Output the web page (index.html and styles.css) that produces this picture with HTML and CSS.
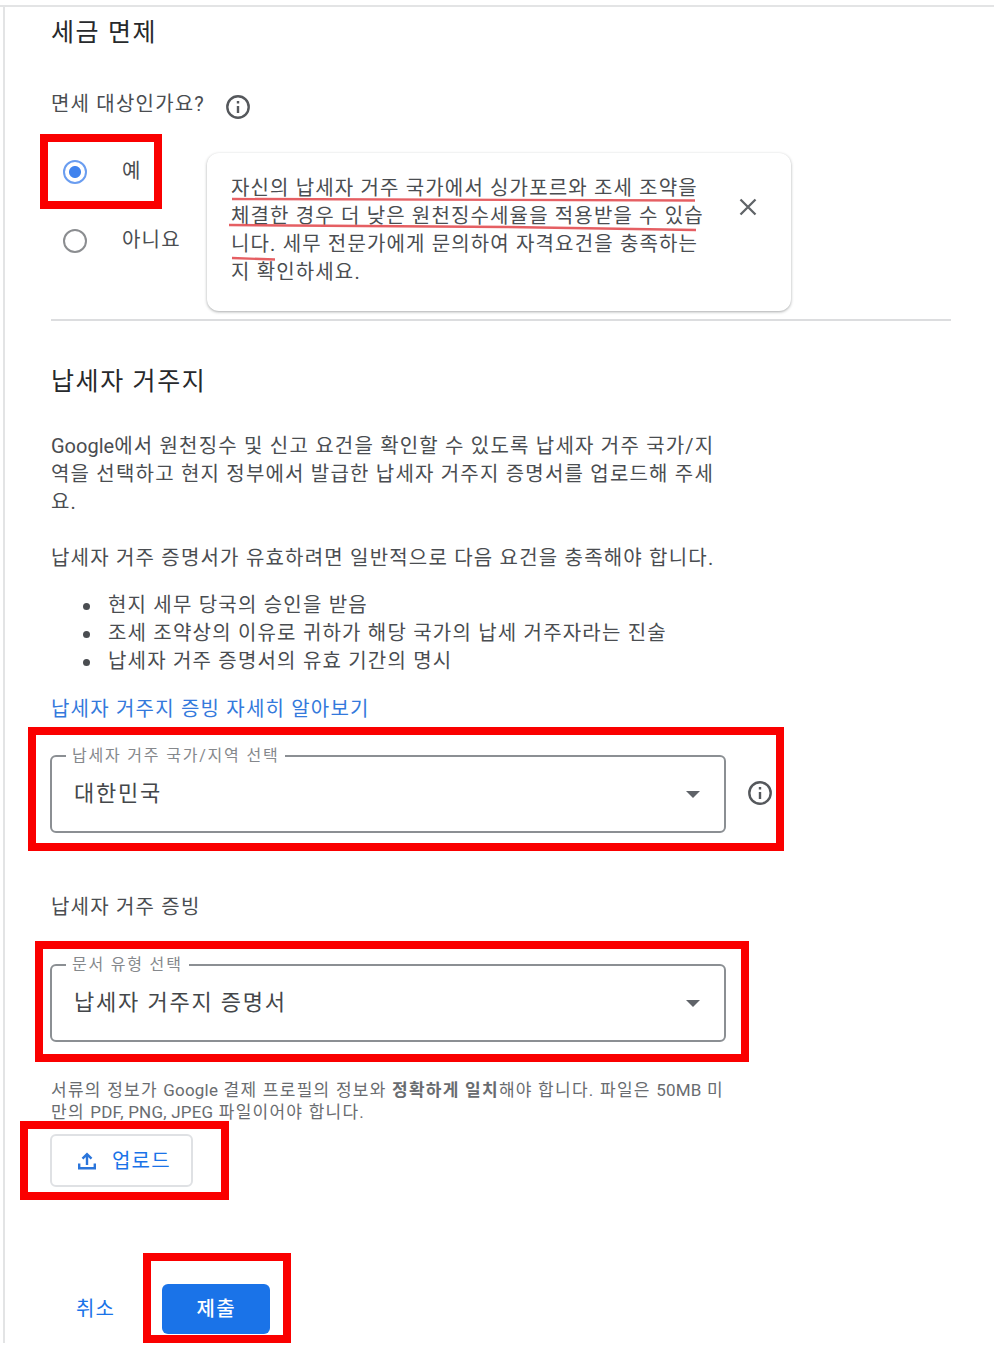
FILE: index.html
```html
<!DOCTYPE html>
<html lang="ko">
<head>
    <meta charset="UTF-8">
    <meta name="viewport" content="width=device-width, initial-scale=1.0">
    <title>세금 면제</title>
    <link rel="stylesheet" href="styles.css">
</head>
<body>
    <div class="page">
        <main class="content">
            <h2 class="title">세금 면제</h2>
            <div class="question">
                <span>면세 대상인가요?</span>
                <svg class="info" viewBox="0 0 24 24"><circle cx="12" cy="12" r="10.7"/><path d="M12 11v7M12 6v2.6"/></svg>
            </div>

            <div class="exempt">
                <div class="options">
                    <label class="option"><span class="radio checked"></span><span>예</span></label>
                    <label class="option"><span class="radio"></span><span>아니요</span></label>
                </div>
                <div class="tip">
                    <p class="tip-text">자신의 납세자 거주 국가에서 싱가포르와 조세 조약을<br>체결한 경우 더 낮은 원천징수세율을 적용받을 수 있습<br>니다. 세무 전문가에게 문의하여 자격요건을 충족하는<br>지 확인하세요.</p>
                    <svg class="close" viewBox="0 0 18 18"><path d="M1.5 1.5l15 15M16.5 1.5l-15 15"/></svg>
                    <svg class="underline" viewBox="0 0 584 158">
                        <path d="M25 46L488 47.5"/>
                        <path d="M22 72L300 74L489 77"/>
                        <path d="M25 105L68 106.500"/>
                    </svg>
                </div>
            </div>

            <h2 class="title residence">납세자 거주지</h2>
            <p class="text"><span class="latin">Google</span>에서 원천징수 및 신고 요건을 확인할 수 있도록 납세자 거주 국가/지<br>역을 선택하고 현지 정부에서 발급한 납세자 거주지 증명서를 업로드해 주세<br>요.</p>
            <p class="text">납세자 거주 증명서가 유효하려면 일반적으로 다음 요건을 충족해야 합니다.</p>
            <ul class="list">
                <li>현지 세무 당국의 승인을 받음</li>
                <li>조세 조약상의 이유로 귀하가 해당 국가의 납세 거주자라는 진술</li>
                <li>납세자 거주 증명서의 유효 기간의 명시</li>
            </ul>
            <a class="link">납세자 거주지 증빙 자세히 알아보기</a>

            <div class="select-row">
                <fieldset class="select">
                    <legend>납세자 거주 국가/지역 선택</legend>
                    <div class="value"><span>대한민국</span><i class="arrow"></i></div>
                </fieldset>
                <svg class="info" viewBox="0 0 24 24"><circle cx="12" cy="12" r="10.7"/><path d="M12 11v7M12 6v2.6"/></svg>
            </div>

            <p class="subtitle">납세자 거주 증빙</p>
            <div class="select-row">
                <fieldset class="select">
                    <legend>문서 유형 선택</legend>
                    <div class="value"><span>납세자 거주지 증명서</span><i class="arrow"></i></div>
                </fieldset>
            </div>

            <p class="help">서류의 정보가 <span class="latin">Google</span> 결제 프로필의 정보와 <b>정확하게 일치</b>해야 합니다. 파일은 <span class="latin">50MB</span> 미<br>만의 <span class="latin">PDF, PNG, JPEG</span> 파일이어야 합니다.</p>
            <button class="upload">
                <svg viewBox="0 0 18 18"><path d="M1.200 11.500V16.200H16.800V11.500M9 13V3M4.500 6.700L9 2.200L13.500 6.700"/></svg>
                <span>업로드</span>
            </button>

            <div class="actions">
                <button class="cancel">취소</button>
                <button class="submit">제출</button>
            </div>
        </main>

        <!-- red highlight boxes -->
        <div class="mark mark-yes"></div>
        <div class="mark mark-country"></div>
        <div class="mark mark-document"></div>
        <div class="mark mark-upload"></div>
        <div class="mark mark-submit"></div>
    </div>
</body>
</html>
```
FILE: styles.css
```css
* {
    box-sizing: border-box;
}
body {
    margin: 0;
    padding-top: 5px;
    background: #fff;
    color: #4a4d51;
    font-family: Roboto, 'Noto Sans CJK KR', sans-serif;
    font-size: 20px;
    line-height: 28px;
    letter-spacing: 1.2px;
    white-space: nowrap;
}
p, h2, ul, fieldset {
    margin: 0;
    padding: 0;
}
button {
    padding: 0;
    border: none;
    background: none;
    font: inherit;
    letter-spacing: inherit;
    color: #1a73e8;
}
.page {
    border-top: 2px solid #e3e4e5;
}
.content {
    height: 1336px;
    margin-left: 3px;
    padding: 10px 0 0 46px;
    border-left: 2px solid #e3e4e5;
}
.title {
    height: 32px;
    font-size: 25px;
    font-weight: 400;
    line-height: 32px;
    letter-spacing: 1.6px;
    color: #27292c;
}
.question {
    display: flex;
    align-items: center;
    gap: 21px;
    height: 28px;
    margin-top: 41px;
}
.info {
    width: 24px;
    height: 24px;
    margin-top: 5px;
    fill: none;
    stroke: #55585c;
    stroke-width: 2.4;
}
.exempt {
    display: flex;
    width: 900px;
    height: 168px;
    margin-top: 35px;
    border-bottom: 2px solid #dcdddf;
}
.options {
    width: 156px;
    padding: 4px 0 0 12px;
}
.option {
    display: flex;
    align-items: center;
    gap: 35px;
    height: 28px;
    margin-bottom: 41px;
}
.radio {
    width: 24px;
    height: 24px;
    margin-top: 2px;
    border: 2px solid #8b8d90;
    border-radius: 50%;
}
.checked {
    border-color: #6a9df0;
    background: radial-gradient(circle, #4083ee 5.5px, #fff 6.5px);
}
.tip {
    position: relative;
    display: flex;
    width: 584px;
    height: 158px;
    padding: 21px 24px;
    border-radius: 12px;
    background: #fff;
    box-shadow: 0 1px 3px rgba(60, 64, 67, .45);
}
.tip-text {
    width: 508px;
    letter-spacing: 1.15px;
}
.close {
    width: 18px;
    height: 18px;
    margin-top: 24px;
    stroke: #606468;
    stroke-width: 2.3;
}
.underline {
    position: absolute;
    inset: 0;
    width: 584px;
    height: 158px;
    fill: none;
    stroke: rgba(222, 55, 60, .8);
    stroke-width: 2.4;
}
.residence {
    margin-top: 45px;
    margin-bottom: 34px;
}
.text {
    margin-bottom: 28px;
}
.latin {
    letter-spacing: 0;
}
.list {
    margin: -9px 0 20px;
    padding-left: 32px;
    list-style: none;
}
.list li {
    display: flex;
    align-items: center;
    gap: 18px;
}
.list li::before {
    content: '';
    width: 7px;
    height: 7px;
    margin-top: 2px;
    border-radius: 50%;
    background: #4a4d51;
}
.link {
    display: block;
    color: #3479dc;
}
.select-row {
    display: flex;
    align-items: center;
    gap: 22px;
    margin: 22px 0 0 -1px;
}
.select {
    width: 676px;
    height: 88px;
    padding: 0 24px 0 22px;
    border: 2px solid #8b8f93;
    border-radius: 6px;
}
.select-row .info {
    margin-top: 8px;
}
.select legend {
    height: 22px;
    margin-left: -8px;
    padding: 0 6px;
    font-size: 16px;
    line-height: 22px;
    letter-spacing: 1.8px;
    color: #85888c;
}
.value {
    display: flex;
    align-items: center;
    justify-content: space-between;
    height: 54px;
    font-size: 22px;
    letter-spacing: 1.8px;
    color: #44474a;
}
.arrow {
    border: 7px solid transparent;
    border-top-color: #5f6368;
    border-bottom: none;
}
.subtitle {
    margin-top: 60px;
}
.subtitle + .select-row {
    margin-top: 33px;
}
.help {
    margin-top: 37px;
    font-size: 17px;
    line-height: 22px;
    letter-spacing: 1.25px;
    color: #696c70;
}
.help .latin {
    letter-spacing: .2px;
}
.upload {
    display: flex;
    align-items: center;
    gap: 16px;
    width: 143px;
    height: 53px;
    margin: 11px 0 0 -1px;
    padding-left: 26px;
    border: 2px solid #dfe1e4;
    border-radius: 6px;
}
.upload svg {
    width: 18px;
    height: 18px;
    fill: none;
    stroke: #2a75db;
    stroke-width: 2.4;
}
.actions {
    display: flex;
    align-items: center;
    gap: 47px;
    margin: 97px 0 0 25px;
}
.submit {
    width: 108px;
    height: 50px;
    border-radius: 6px;
    background: #1a73e8;
    color: #fff;
    font-weight: 500;
}
.mark {
    position: absolute;
    border: 8px solid #fa0000;
}
.mark-yes {
    left: 40px;
    top: 134px;
    width: 122px;
    height: 75px;
}
.mark-country {
    left: 28px;
    top: 727px;
    width: 756px;
    height: 124px;
}
.mark-document {
    left: 35px;
    top: 941px;
    width: 714px;
    height: 121px;
}
.mark-upload {
    left: 20px;
    top: 1121px;
    width: 209px;
    height: 79px;
}
.mark-submit {
    left: 143px;
    top: 1253px;
    width: 148px;
    height: 90px;
}
```
